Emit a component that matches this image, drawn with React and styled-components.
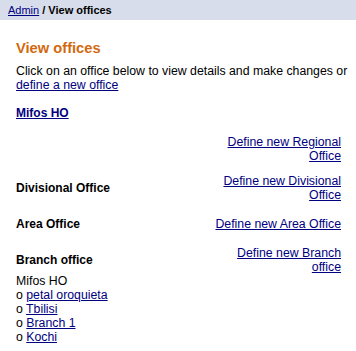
import styled, { createGlobalStyle } from "styled-components";

const GlobalStyle = createGlobalStyle`
    body {
        margin: 0;
        background: #ffffff;
        font-family: "Liberation Sans", Arial, sans-serif;
        font-size: 12.3px;
        color: #000000;
    }
`

const offices = ["petal oroquieta", "Tbilisi", "Branch 1", "Kochi"]

const App = () => {
    return (
        <>
            <GlobalStyle />
            <Breadcrumb>
                <Link href="#">Admin</Link>
                <strong> / View offices</strong>
            </Breadcrumb>
            <Content>
                <Heading>View offices</Heading>
                <Intro>
                    Click on an office below to view details and make changes or{" "}
                    <Link href="#">define a new office</Link>
                </Intro>
                <HeadOffice href="#">Mifos HO</HeadOffice>
                <OfficeTable>
                    <OfficeRow>
                        <TypeLabel></TypeLabel>
                        <DefineLink href="#">Define new Regional Office</DefineLink>
                    </OfficeRow>
                    <OfficeRow>
                        <TypeLabel>Divisional Office</TypeLabel>
                        <DefineLink href="#">Define new Divisional Office</DefineLink>
                    </OfficeRow>
                    <OfficeRow>
                        <TypeLabel>Area Office</TypeLabel>
                        <DefineLink href="#">Define new Area Office</DefineLink>
                    </OfficeRow>
                    <OfficeRow>
                        <TypeLabel>Branch office</TypeLabel>
                        <DefineLink href="#">Define new Branch office</DefineLink>
                    </OfficeRow>
                </OfficeTable>
                <ParentName>Mifos HO</ParentName>
                <BranchList>
                    {offices.map((name) => (
                        <BranchItem key={name}>
                            o <Link href="#">{name}</Link>
                        </BranchItem>
                    ))}
                </BranchList>
            </Content>
        </>
    )
}

const Breadcrumb = styled.div`
    height: 20px;
    line-height: 20px;
    padding-left: 8px;
    background: #d7ddeb;
    font-size: 11px;
`
const Link = styled.a`
    color: #000080;
    text-decoration: underline;
`
const Content = styled.div`
    padding: 19px 6px 0 16px;
`
const Heading = styled.h2`
    margin: 0 0 6px;
    font-size: 14.7px;
    line-height: 19px;
    font-weight: bold;
    color: #d2690f;
`
const Intro = styled.p`
    margin: 0;
    line-height: 14px;
`
const HeadOffice = styled.a`
    display: inline-block;
    margin-top: 14px;
    font-size: 12px;
    font-weight: bold;
    color: #000080;
    text-decoration: underline;
    line-height: 14px;
`
const OfficeTable = styled.div`
    display: flex;
    flex-direction: column;
    gap: 11px;
    margin: 15px 9px 0 0;
`
const OfficeRow = styled.div`
    display: flex;
    align-items: center;
    justify-content: space-between;
    min-height: 22px;
`
const TypeLabel = styled.span`
    font-size: 12px;
    font-weight: bold;
    line-height: 14px;
`
const DefineLink = styled.a`
    width: 128px;
    text-align: right;
    line-height: 14px;
    color: #000080;
    text-decoration: underline;
`
const ParentName = styled.div`
    line-height: 14px;
`
const BranchList = styled.ul`
    margin: 0;
    padding: 0;
    list-style: none;
`
const BranchItem = styled.li`
    line-height: 14px;
`

export default App
